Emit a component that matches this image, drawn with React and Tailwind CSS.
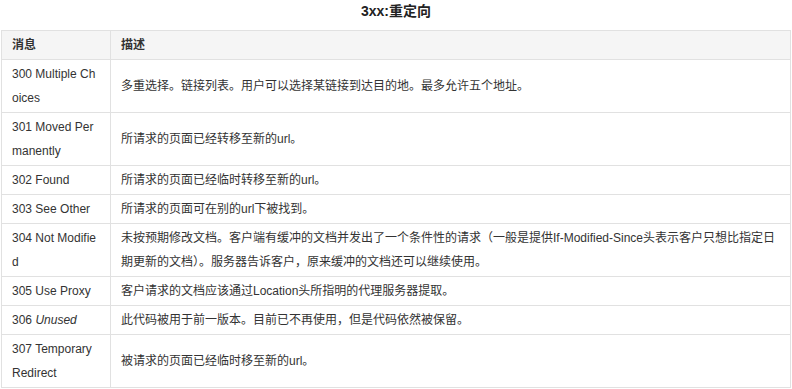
import React from 'react';

const rows = [
  { code: '300 Multiple Choices', desc: '多重选择。链接列表。用户可以选择某链接到达目的地。最多允许五个地址。' },
  { code: '301 Moved Permanently', desc: '所请求的页面已经转移至新的url。' },
  { code: '302 Found', desc: '所请求的页面已经临时转移至新的url。' },
  { code: '303 See Other', desc: '所请求的页面可在别的url下被找到。' },
  {
    code: '304 Not Modified',
    desc: '未按预期修改文档。客户端有缓冲的文档并发出了一个条件性的请求（一般是提供If-Modified-Since头表示客户只想比指定日期更新的文档）。服务器告诉客户，原来缓冲的文档还可以继续使用。',
  },
  { code: '305 Use Proxy', desc: '客户请求的文档应该通过Location头所指明的代理服务器提取。' },
  { code: '306', italic: 'Unused', desc: '此代码被用于前一版本。目前已不再使用，但是代码依然被保留。' },
  { code: '307 Temporary Redirect', desc: '被请求的页面已经临时移至新的url。' },
];

const App = () => {
  return (
    <div
      className="w-[792px] h-[389px] bg-white text-[#333] overflow-hidden"
      style={{ fontFamily: '"Liberation Sans", "Noto Sans CJK SC", sans-serif' }}
    >
      {/* Title */}
      <div className="text-center text-[14px] font-bold leading-[22px] mb-2 text-[#222]">3xx:重定向</div>

      {/* Status table */}
      <table className="w-[790px] mx-auto table-fixed border-collapse text-[12px] leading-6">
        <colgroup>
          <col className="w-[109px]" />
          <col />
        </colgroup>
        <thead>
          <tr className="bg-[#f5f5f5]">
            <th className="border border-[#e1e1e1] px-[10px] py-[2px] text-left font-bold">消息</th>
            <th className="border border-[#e1e1e1] px-[10px] py-[2px] text-left font-bold">描述</th>
          </tr>
        </thead>
        <tbody>
          {rows.map((row) => (
            <tr key={row.code}>
              <td className="border border-[#e1e1e1] px-[10px] py-[2px] align-middle break-all">
                {row.code}
                {row.italic && (
                  <>
                    {' '}
                    <em className="italic">{row.italic}</em>
                  </>
                )}
              </td>
              <td className="border border-[#e1e1e1] px-[10px] py-[2px] align-middle">{row.desc}</td>
            </tr>
          ))}
        </tbody>
      </table>
    </div>
  );
};

export default App;
